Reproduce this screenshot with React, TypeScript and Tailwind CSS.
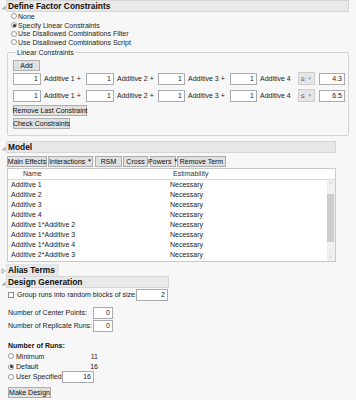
import React from "react";

function Twisty({ open = true }: { open?: boolean }) {
  return open ? (
    <svg width="5" height="5" viewBox="0 0 5 5" className="shrink-0">
      <path d="M4.5 0.5 L4.5 4.5 L0.5 4.5 Z" fill="#a8a8a8" />
    </svg>
  ) : (
    <svg width="5" height="6" viewBox="0 0 5 6" className="shrink-0">
      <path d="M1 0.8 L4.2 3 L1 5.2 Z" fill="none" stroke="#9a9a9a" strokeWidth="0.8" />
    </svg>
  );
}

function SectionHeader({ title, open = true, width }: { title: string; open?: boolean; width: string }) {
  return (
    <div className="flex items-end">
      <div className="flex w-[6px] justify-center pb-[2px]">
        <Twisty open={open} />
      </div>
      <div
        className={`flex h-[12px] items-center border border-[#d6d6d6] bg-[#e8e8e8] pl-[1px] text-[8.4px] leading-none font-bold text-[#111] ${width}`}
      >
        {title}
      </div>
    </div>
  );
}

function Radio({ checked = false }: { checked?: boolean }) {
  return (
    <span className="flex h-[6px] w-[6px] shrink-0 items-center justify-center rounded-full border border-[#9a9a9a] bg-white">
      {checked ? <span className="h-[3px] w-[3px] rounded-full bg-[#333]" /> : null}
    </span>
  );
}

function Field({ value, w = "w-[28px]" }: { value: string; w?: string }) {
  return (
    <div className={`flex h-[12px] shrink-0 items-center justify-end border border-[#a9abb0] bg-white pr-[2px] ${w}`}>
      {value}
    </div>
  );
}

function Btn({ label, w, arrow = false }: { label: string; w: string; arrow?: boolean }) {
  return (
    <div
      className={`flex h-[11px] shrink-0 items-center justify-center gap-[2px] border border-[#adadad] bg-[#e1e1e1] leading-none text-[#111] ${w}`}
    >
      <span>{label}</span>
      {arrow ? <span className="text-[4.5px]">▼</span> : null}
    </div>
  );
}

function Dropdown({ sign }: { sign: string }) {
  return (
    <div className="flex h-[13px] w-[17px] shrink-0 items-center justify-between border border-[#cdcdcd] bg-[#e6e6e6] px-[2px] text-[#444]">
      <span>{sign}</span>
      <span className="text-[4.5px] text-[#999]">▼</span>
    </div>
  );
}

function ConstraintRow({ sign, rhs }: { sign: string; rhs: string }) {
  return (
    <div className="flex h-[12px] items-center">
      <Field value="1" />
      <span className="w-[45px] pl-[3px]">Additive 1 +</span>
      <Field value="1" />
      <span className="w-[44px] pl-[3px]">Additive 2 +</span>
      <Field value="1" w="w-[27px]" />
      <span className="w-[45px] pl-[3px]">Additive 3 +</span>
      <Field value="1" w="w-[27px]" />
      <span className="w-[41px] pl-[3px]">Additive 4</span>
      <Dropdown sign={sign} />
      <div className="ml-[4px]">
        <Field value={rhs} w="w-[26px]" />
      </div>
    </div>
  );
}

const terms = [
  "Additive 1",
  "Additive 2",
  "Additive 3",
  "Additive 4",
  "Additive 1*Additive 2",
  "Additive 1*Additive 3",
  "Additive 1*Additive 4",
  "Additive 2*Additive 3",
];

export default function App() {
  return (
    <div className="h-[400px] w-[356px] overflow-hidden bg-[#f7f7f7] text-[7px] leading-none whitespace-nowrap text-[#222] [font-family:'Liberation_Sans',Arial,sans-serif]">
      {/* Define Factor Constraints */}
      <SectionHeader title="Define Factor Constraints" width="w-[343px]" />
      <div className="flex flex-col pl-[11px]">
        {[
          ["None", false],
          ["Specify Linear Constraints", true],
          ["Use Disallowed Combinations Filter", false],
          ["Use Disallowed Combinations Script", false],
        ].map(([label, on]) => (
          <div key={label as string} className="flex h-[8.7px] items-center gap-[1px]">
            <Radio checked={on as boolean} />
            <span>{label as string}</span>
          </div>
        ))}
      </div>
      <fieldset className="mx-[7px] mt-[1px] rounded-[2px] border border-[#d3d3d3] pb-[6px] pl-[5px]">
        <legend className="ml-[3px] px-[1px] text-[7px] leading-[9px]">Linear Constraints</legend>
        <div className="mt-[3px] flex flex-col">
          <Btn label="Add" w="w-[27px] h-[10px]" />
          <div className="mt-[2px]">
            <ConstraintRow sign="≥" rhs="4.3" />
          </div>
          <div className="mt-[5px]">
            <ConstraintRow sign="≤" rhs="6.5" />
          </div>
          <div className="mt-[3px]">
            <Btn label="Remove Last Constraint" w="w-[74px]" />
          </div>
          <div className="mt-[2px]">
            <Btn label="Check Constraints" w="w-[57px]" />
          </div>
        </div>
      </fieldset>

      {/* Model */}
      <div className="mt-[5px]">
        <SectionHeader title="Model" width="w-[330px]" />
      </div>
      <div className="mt-[3px] flex gap-[1px] pl-[7px]">
        <Btn label="Main Effects" w="w-[40px]" />
        <Btn label="Interactions" w="w-[45px]" arrow />
        <div className="ml-[1px]">
          <Btn label="RSM" w="w-[27px]" />
        </div>
        <Btn label="Cross" w="w-[25px]" />
        <div className="ml-[1px]">
          <Btn label="Powers" w="w-[26px]" arrow />
        </div>
        <Btn label="Remove Term" w="w-[49px]" />
      </div>
      <div className="mt-[1px] ml-[7px] w-[329px] border border-[#c9c9c9] bg-white">
        <div className="flex h-[11px] items-center border-b border-[#d9d9d9] text-[#333]">
          <span className="w-[161px] pl-[15px]">Name</span>
          <span className="pl-[4px]">Estimability</span>
        </div>
        <div className="flex h-[81px]">
          <div className="flex flex-1 flex-col overflow-hidden">
            {terms.map((t) => (
              <div key={t} className="flex h-[10px] shrink-0 items-center">
                <span className="w-[161px] pl-[3px]">{t}</span>
                <span className="pl-[1px]">Necessary</span>
              </div>
            ))}
          </div>
          <div className="flex w-[8px] flex-col items-center bg-[#f0f0f0] pr-[1px]">
            <span className="mt-[1px] text-[5px] text-[#bbb]">˄</span>
            <div className="mt-[8px] h-[48px] w-[7px] bg-[#cdcdcd]" />
            <span className="mt-auto mb-[1px] text-[5px] text-[#bbb]">˅</span>
          </div>
        </div>
      </div>

      {/* Alias Terms */}
      <div className="mt-[2px]">
        <SectionHeader title="Alias Terms" open={false} width="pr-[3px] border-[#e4e4e4]" />
      </div>

      {/* Design Generation */}
      <SectionHeader title="Design Generation" width="w-[163px]" />
      <div className="flex flex-col pl-[8px]">
        <div className="mt-[2px] flex h-[10px] items-center">
          <span className="h-[6px] w-[6px] shrink-0 border border-[#8d8d8d] bg-white" />
          <span className="w-[122px] pl-[3px]">Group runs into random blocks of size:</span>
          <Field value="2" w="w-[32px] h-[10px]" />
        </div>
        <div className="mt-[8px] flex h-[10px] items-center">
          <span className="w-[85px]">Number of Center Points:</span>
          <Field value="0" w="w-[20px] h-[10px]" />
        </div>
        <div className="mt-[3px] flex h-[10px] items-center">
          <span className="w-[85px]">Number of Replicate Runs:</span>
          <Field value="0" w="w-[20px] h-[10px]" />
        </div>
        <div className="mt-[10px] flex h-[10px] items-center font-bold text-[#111]">Number of Runs:</div>
        <div className="flex h-[11px] items-center">
          <Radio />
          <span className="w-[72px] pl-[2px]">Minimum</span>
          <span className="w-[12px] text-right">11</span>
        </div>
        <div className="flex h-[10px] items-center">
          <Radio checked />
          <span className="w-[72px] pl-[2px]">Default</span>
          <span className="w-[12px] text-right">16</span>
        </div>
        <div className="flex h-[10px] items-center">
          <Radio />
          <span className="w-[48px] pl-[2px]">User Specified</span>
          <Field value="16" w="w-[32px] h-[10px]" />
        </div>
        <div className="mt-[5px]">
          <Btn label="Make Design" w="w-[43px]" />
        </div>
      </div>
    </div>
  );
}
